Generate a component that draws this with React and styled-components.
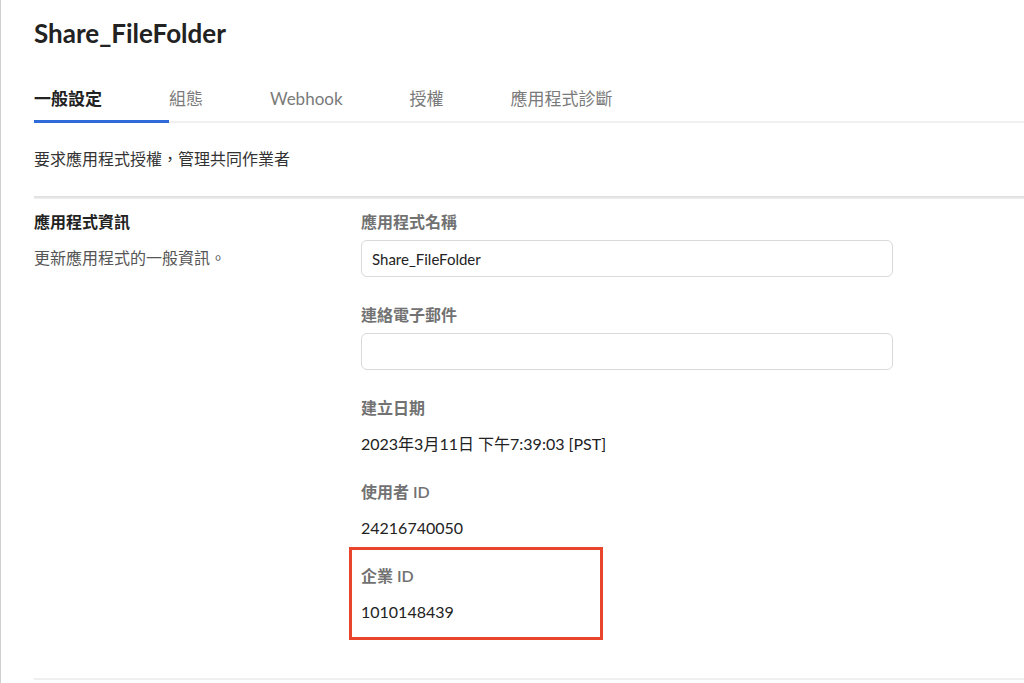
import React from 'react'
import styled, { createGlobalStyle } from 'styled-components'

const GlobalStyle = createGlobalStyle`
  html, body {
    margin: 0;
    padding: 0;
    background: #fff;
  }
  body {
    font-family: Lato, "Noto Sans CJK TC", sans-serif;
    color: #222;
    -webkit-font-smoothing: antialiased;
  }
`

const Page = styled.div`
  min-height: 100vh;
  box-sizing: border-box;
  border-left: 1px solid #cfcfcf;
  padding-left: 33px;
  overflow: hidden;
`

const Title = styled.h1`
  margin: 0;
  padding-top: 17px;
  font-size: 26px;
  line-height: 32px;
  font-weight: 700;
  color: #222;
`

const TabBar = styled.nav`
  display: flex;
  margin-top: 25px;
  border-bottom: 2px solid #f0f0f0;
`

const Tab = styled.div`
  padding: 13px 67px 9px 0;
  margin-bottom: -2px;
  font-size: 17px;
  line-height: 24px;
  font-weight: ${p => (p.$active ? 700 : 400)};
  color: ${p => (p.$active ? '#222' : '#7a7a7a')};
  border-bottom: 3px solid ${p => (p.$active ? '#2f6bd8' : 'transparent')};
  white-space: nowrap;
`

const Intro = styled.p`
  margin: 0;
  padding: 26px 0 27px;
  font-size: 16px;
  line-height: 20px;
  color: #333;
`

const Divider = styled.div`
  height: 3px;
  background: linear-gradient(#dcdcdc, #f0f0f0);
`

const Section = styled.section`
  display: flex;
  padding: 13px 0 56px;
  border-bottom: 2px solid #efefef;
`

const Aside = styled.div`
  width: 327px;
  flex-shrink: 0;
  display: flex;
  flex-direction: column;
  gap: 16px;
`

const AsideTitle = styled.h2`
  margin: 0;
  font-size: 16px;
  line-height: 20px;
  font-weight: 700;
  color: #222;
`

const AsideText = styled.p`
  margin: 0;
  font-size: 16px;
  line-height: 20px;
  color: #555;
`

const Fields = styled.div`
  display: flex;
  flex-direction: column;
  gap: 28px;
  width: 532px;
`

const Field = styled.div`
  position: relative;
  display: flex;
  flex-direction: column;
  gap: ${p => (p.$input ? '8px' : '16px')};

  ${p =>
    p.$highlight &&
    `
    &::after {
      content: '';
      position: absolute;
      left: -12px;
      top: -19px;
      width: 254px;
      height: 93px;
      border: 3px solid #e8452c;
      box-sizing: border-box;
    }
  `}
`

const Label = styled.label`
  font-size: 16px;
  line-height: 20px;
  font-weight: 600;
  color: #727272;
`

const Value = styled.div`
  font-size: 16px;
  line-height: 20px;
  color: #222;
`

const Input = styled.input`
  box-sizing: border-box;
  width: 532px;
  height: 37px;
  padding: 0 10px;
  border: 1px solid #d9d9d9;
  border-radius: 6px;
  font-family: inherit;
  font-size: 15px;
  color: #222;
  background: #fff;
  outline: none;
`

const tabs = ['一般設定', '組態', 'Webhook', '授權', '應用程式診斷']

const App = () => {
  return (
    <Page>
      <GlobalStyle />
      <Title>Share_FileFolder</Title>
      <TabBar>
        {tabs.map((t, i) => (
          <Tab key={t} $active={i === 0}>{t}</Tab>
        ))}
      </TabBar>
      <Intro>要求應用程式授權，管理共同作業者</Intro>
      <Divider />
      <Section>
        <Aside>
          <AsideTitle>應用程式資訊</AsideTitle>
          <AsideText>更新應用程式的一般資訊。</AsideText>
        </Aside>
        <Fields>
          <Field $input>
            <Label>應用程式名稱</Label>
            <Input defaultValue="Share_FileFolder" />
          </Field>
          <Field $input>
            <Label>連絡電子郵件</Label>
            <Input defaultValue="" />
          </Field>
          <Field>
            <Label>建立日期</Label>
            <Value>2023年3月11日 下午7:39:03 [PST]</Value>
          </Field>
          <Field>
            <Label>使用者 ID</Label>
            <Value>24216740050</Value>
          </Field>
          <Field $highlight>
            <Label>企業 ID</Label>
            <Value>1010148439</Value>
          </Field>
        </Fields>
      </Section>
    </Page>
  )
}

export default App
